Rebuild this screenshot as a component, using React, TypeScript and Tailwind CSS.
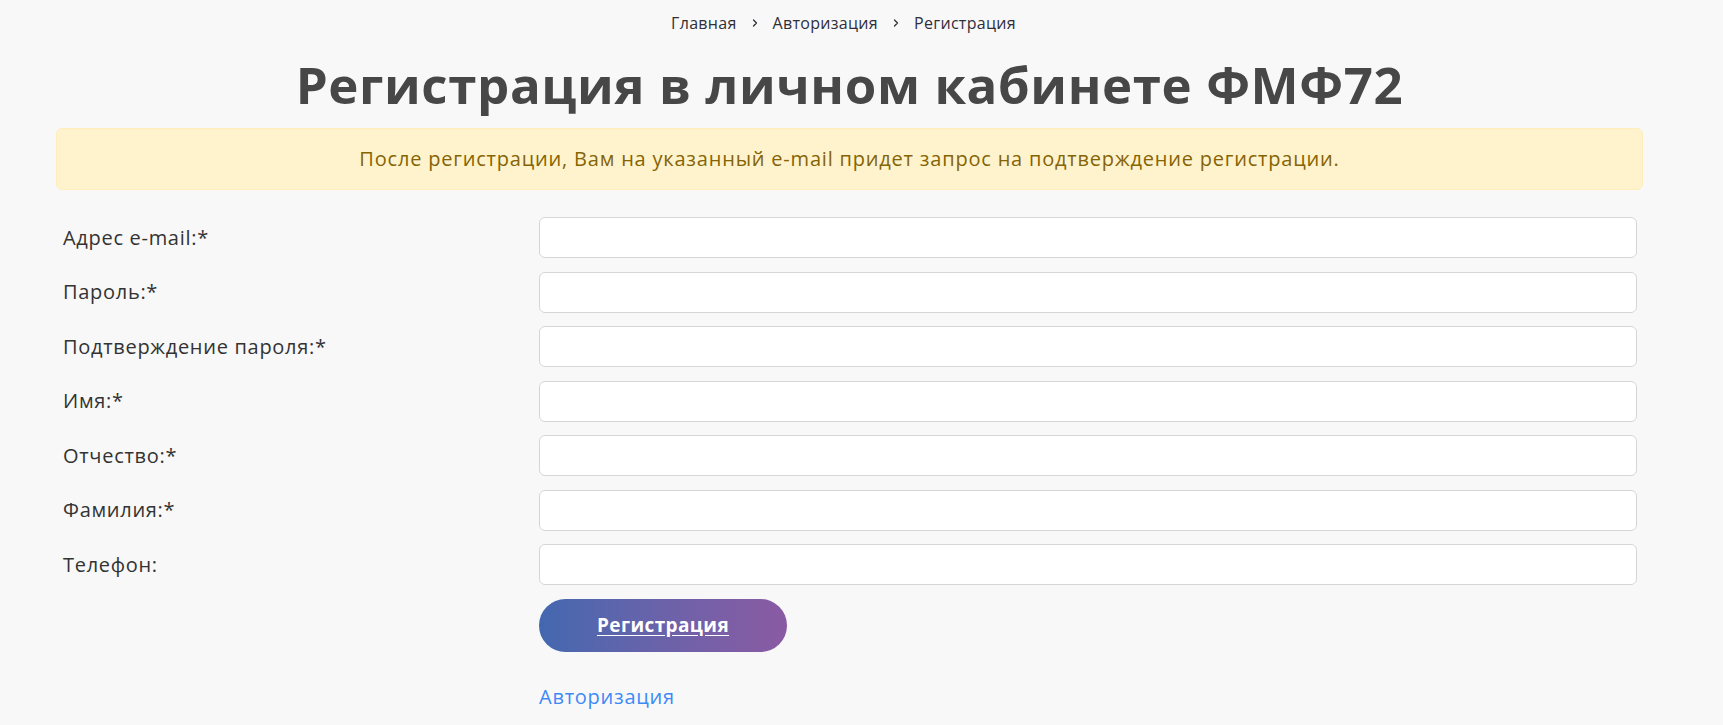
import { ChevronRight } from "lucide-react";

const fields = [
  { label: "Адрес e-mail:*", type: "email" },
  { label: "Пароль:*", type: "password" },
  { label: "Подтверждение пароля:*", type: "password" },
  { label: "Имя:*", type: "text" },
  { label: "Отчество:*", type: "text" },
  { label: "Фамилия:*", type: "text" },
  { label: "Телефон:", type: "tel" },
];

const font = { fontFamily: '"Open Sans", "Liberation Sans", sans-serif' };

export default function App() {
  return (
    <div className="min-h-[725px] w-full bg-[#f8f8f8] text-[#333]" style={font}>
      <nav className="flex h-[46px] items-center justify-center gap-[12px] pr-[36px] text-[16px] tracking-[0.3px] text-[#2f2f3a]">
        <a href="#" className="text-[#2f2f3a]">Главная</a>
        <ChevronRight className="h-[12px] w-[12px]" strokeWidth={2.5} />
        <a href="#" className="text-[#2f2f3a]">Авторизация</a>
        <ChevronRight className="h-[12px] w-[12px]" strokeWidth={2.5} />
        <span>Регистрация</span>
      </nav>

      <div className="ml-[56px] w-[1587px]">
        <h1 className="mt-[4px] text-center text-[51px] font-bold leading-[68px] tracking-[0.6px] text-[#474747]">
          Регистрация в личном кабинете ФМФ72
        </h1>

        <div className="mt-[10px] flex h-[62px] items-center justify-center rounded-[6px] border border-[#ffeeba] bg-[#fff3cd] text-[20px] tracking-[0.8px] text-[#856404]">
          После регистрации, Вам на указанный e-mail придет запрос на подтверждение регистрации.
        </div>

        <form className="mt-[27px] flex flex-col gap-y-[13.5px]" onSubmit={(e) => e.preventDefault()}>
          {fields.map((f) => (
            <div key={f.label} className="flex items-center">
              <label className="w-[483px] pl-[7px] text-[20px] tracking-[0.7px] text-[#333]">{f.label}</label>
              <input
                type={f.type}
                className="h-[41px] w-[1098px] rounded-[6px] border border-[#d6d6d6] bg-white px-3 outline-none"
              />
            </div>
          ))}

          <div className="flex pl-[483px]">
            <button
              type="submit"
              className="h-[53px] w-[248px] rounded-full bg-gradient-to-r from-[#4268b0] to-[#8a5aa3] text-[19px] font-bold tracking-[0.4px] text-white underline underline-offset-[3px]"
            >
              Регистрация
            </button>
          </div>
        </form>

        <div className="mt-[30px] pl-[483px]">
          <a href="#" className="text-[20px] tracking-[0.75px] text-[#3d8af7]">Авторизация</a>
        </div>
      </div>
    </div>
  );
}
